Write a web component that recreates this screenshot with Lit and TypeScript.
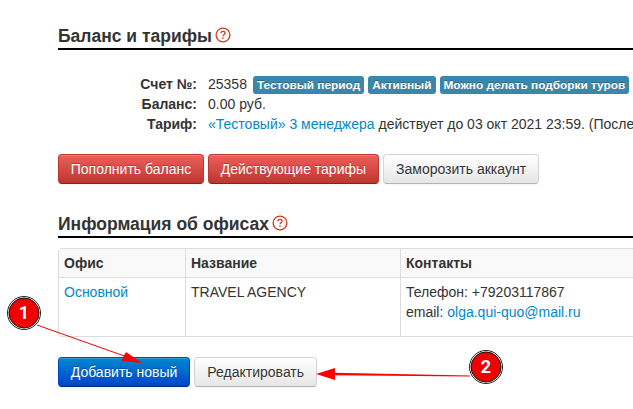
import { LitElement, html, css, svg } from "lit";
import { customElement } from "lit/decorators.js";

const help = html`<svg class="help" width="16" height="16" viewBox="0 0 16 16" aria-hidden="true">
  <circle cx="8" cy="8" r="6.9" fill="none" stroke="#d9341c" stroke-width="1.3"></circle>
  <path d="M5.9 6.3c0-1.3 1-2 2.1-2s2.1.7 2.1 1.9c0 1.6-2.1 1.5-2.1 3.1" fill="none" stroke="#d9341c" stroke-width="1.3"></path>
  <rect x="7.3" y="10.4" width="1.4" height="1.4" fill="#d9341c"></rect>
</svg>`;

const marker = (cx: number, cy: number, n: string) => svg`
  <circle cx=${cx} cy=${cy} r="16.5" fill="#fff" stroke="#222" stroke-width="1"></circle>
  <circle cx=${cx} cy=${cy} r="15" fill="#f00000" stroke="#111" stroke-width="1"></circle>
  <text x=${cx} y=${cy + 6} text-anchor="middle" class="num">${n}</text>`;

@customElement("app-root")
export class AppRoot extends LitElement {
  static styles = css`
    :host {
      display: block;
      position: relative;
      width: 633px;
      height: 409px;
      overflow: hidden;
      background: #fff;
      font: 14px/20px "Liberation Sans", Arial, sans-serif;
      color: #333;
    }
    .page { padding: 24px 0 0 58px; width: 700px; box-sizing: border-box; }
    h2 {
      margin: 0;
      font-size: 17.5px;
      line-height: 22px;
      font-weight: bold;
      color: #333;
      border-bottom: 2px solid #000;
      padding-bottom: 1px;
      display: flex;
      align-items: center;
      gap: 3px;
      height: 23px;
      box-sizing: content-box;
    }
    .help { margin-top: -1px; flex: none; }
    .info {
      display: grid;
      grid-template-columns: 139px auto;
      column-gap: 11px;
      justify-content: start;
      margin-top: 24px;
      white-space: nowrap;
    }
    .k { text-align: right; font-weight: bold; }
    .v { display: flex; align-items: center; gap: 4px; }
    .v .num-val { margin-right: 2px; }
    .label {
      background: #3a87ad;
      color: #fff;
      font-size: 11.844px;
      font-weight: bold;
      line-height: 14px;
      padding: 2px 4px;
      margin-top: 2px;
      border-radius: 3px;
      text-shadow: 0 -1px 0 rgba(0,0,0,.25);
    }
    a { color: #0088cc; text-decoration: none; }
    .text-line { white-space: pre; }
    .btns { display: flex; gap: 4px; margin-top: 20px; }
    .btn {
      box-sizing: border-box;
      height: 30px;
      padding: 0 11.75px;
      border-radius: 4px;
      font: 14px/28px "Liberation Sans", Arial, sans-serif;
      border: 1px solid #ccc;
      white-space: nowrap;
      box-shadow: inset 0 1px 0 rgba(255,255,255,.2), 0 1px 2px rgba(0,0,0,.05);
    }
    .red {
      color: #fff;
      background: linear-gradient(#ee5f5b, #bd362f);
      border-color: #bd362f #bd362f #802420;
      text-shadow: 0 -1px 0 rgba(0,0,0,.25);
    }
    .plain {
      padding: 0 12.25px;
      color: #333;
      background: linear-gradient(#fff, #e6e6e6);
      border-color: #d5d5d5 #d5d5d5 #b3b3b3;
      text-shadow: 0 1px 1px rgba(255,255,255,.75);
    }
    .blue {
      color: #fff;
      background: linear-gradient(#0088cc, #0044cc);
      border-color: #0044cc #0044cc #002a80;
      text-shadow: 0 -1px 0 rgba(0,0,0,.25);
    }
    .second { margin-top: 28px; }
    table {
      border-collapse: separate;
      border-spacing: 0;
      margin-top: 10px;
      width: 640px;
      table-layout: fixed;
      border: 1px solid #ddd;
      border-right: 0;
      border-radius: 4px 0 0 4px;
    }
    th, td {
      padding: 4px 5px;
      text-align: left;
      vertical-align: top;
      border-left: 1px solid #ddd;
      line-height: 20px;
    }
    th:first-child, td:first-child { border-left: 0; }
    th { background: #f9f9f9; font-weight: bold; height: 20px; }
    td { border-top: 1px solid #ddd; height: 50px; }
    .overlay { position: absolute; left: 0; top: 0; pointer-events: none; }
    .num { font: bold 18px "Roboto", "Liberation Sans", sans-serif; fill: #fff; }
  `;

  render() {
    return html`
      <div class="page">
        <h2>Баланс и тарифы ${help}</h2>
        <div class="info">
          <div class="k">Счет №:</div>
          <div class="v"><span class="num-val">25358</span>
            <span class="label">Тестовый период</span>
            <span class="label">Активный</span>
            <span class="label">Можно делать подборки туров</span></div>
          <div class="k">Баланс:</div>
          <div class="v">0.00 руб.</div>
          <div class="k">Тариф:</div>
          <div class="text-line"><a href="#">«Тестовый» 3 менеджера</a> действует до 03 окт 2021 23:59. (После</div>
        </div>
        <div class="btns">
          <div class="btn red">Пополнить баланс</div>
          <div class="btn red">Действующие тарифы</div>
          <div class="btn plain">Заморозить аккаунт</div>
        </div>
        <h2 class="second">Информация об офисах ${help}</h2>
        <table>
          <colgroup><col style="width:126px" /><col style="width:215px" /><col /></colgroup>
          <tr><th>Офис</th><th>Название</th><th>Контакты</th></tr>
          <tr>
            <td><a href="#">Основной</a></td>
            <td>TRAVEL AGENCY</td>
            <td>Телефон: +79203117867<br />email: <a href="#">olga.qui-quo@mail.ru</a></td>
          </tr>
        </table>
        <div class="btns">
          <div class="btn blue">Добавить новый</div>
          <div class="btn plain">Редактировать</div>
        </div>
      </div>
      <svg class="overlay" width="633" height="409" viewBox="0 0 633 409">
        <line x1="37" y1="325" x2="130" y2="358" stroke="#f00" stroke-width="1"></line>
        <polygon points="142,363 121,361 126,352" fill="#f00"></polygon>
        <polygon points="333,372.8 333,375.2 470,376.6 470,375.6" fill="#f00"></polygon>
        <polygon points="316,374 335,368 335,380" fill="#f00"></polygon>
        ${marker(24, 313, "1")}
        ${marker(486, 367, "2")}
      </svg>
    `;
  }
}
